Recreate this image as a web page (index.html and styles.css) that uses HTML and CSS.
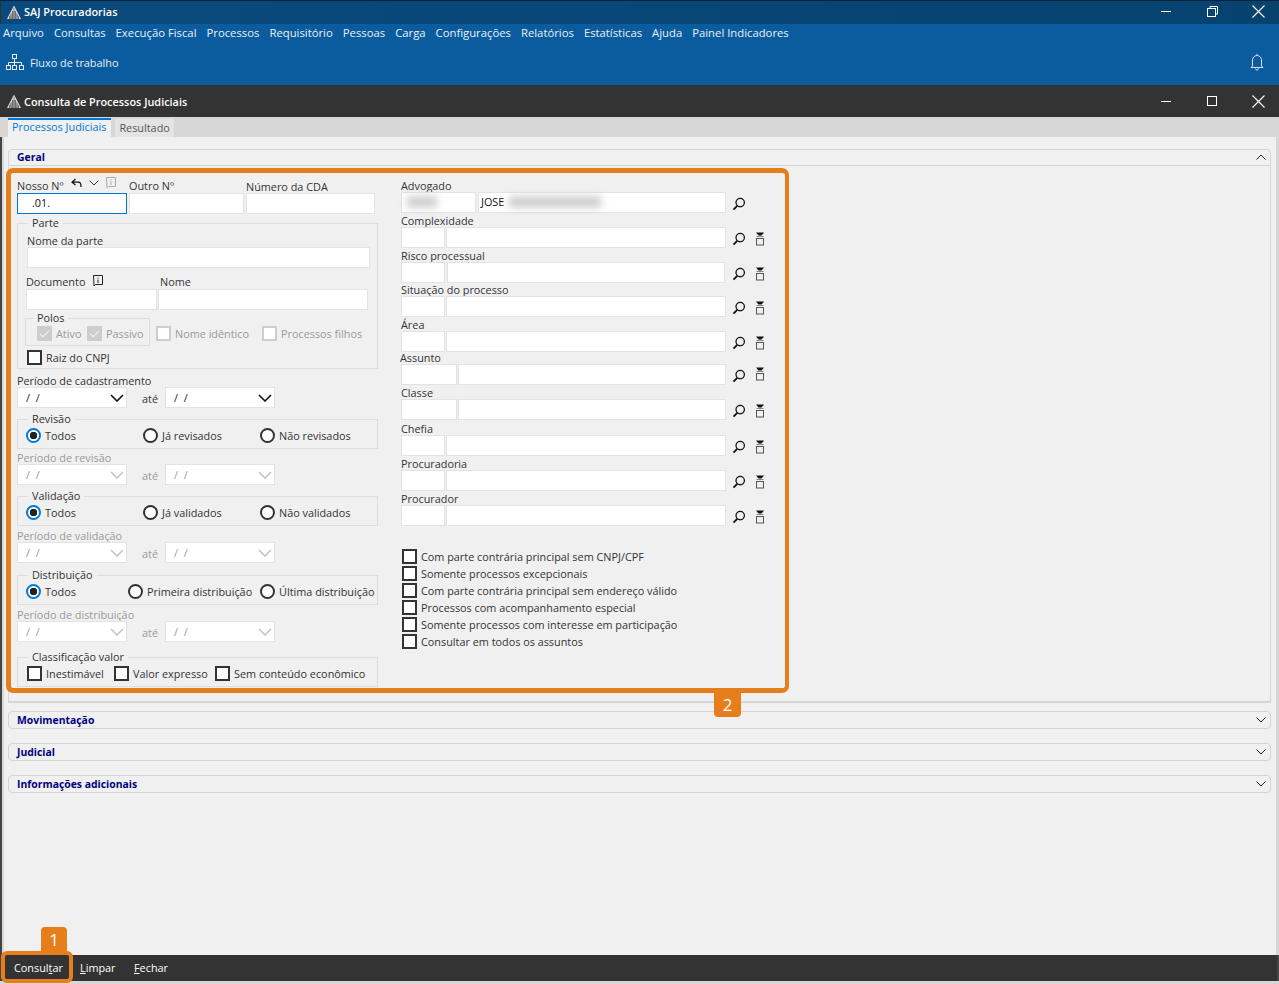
FILE: index.html
```html
<!DOCTYPE html>
<html lang="pt-BR">
<head>
    <meta charset="UTF-8">
    <meta name="viewport" content="width=device-width, initial-scale=1.0">
    <title>SAJ Procuradorias</title>
    <link rel="stylesheet" href="styles.css">
</head>
<body>
    <svg class="svg-defs" width="0" height="0">
        <defs>
            <symbol id="logo" viewBox="0 0 16 16">
                <path d="M8 1.5 L15 15 H1 Z" fill="#d8d8d8"/>
                <path d="M8 4V15M6.5 7V15M9.5 7V15M5 10V15M11 10V15M3.5 12V15M12.5 12V15M6 8H10M5 10H11M4 12H12M3 14H13" stroke="#444" stroke-width=".6" fill="none"/>
            </symbol>
            <symbol id="search" viewBox="0 0 14 14">
                <circle cx="8.2" cy="5.6" r="4.2" fill="none" stroke="#111" stroke-width="1.3"/>
                <path d="M5.2 8.8 L1.5 12.6" stroke="#111" stroke-width="1.8"/>
            </symbol>
            <symbol id="filter" viewBox="0 0 10 14">
                <path d="M1 0.5H9L6.5 3.5H3.5Z" fill="#111"/>
                <path d="M1.5 4.5H8.5" stroke="#888"/>
                <rect x="1.5" y="6.5" width="7" height="6.5" fill="none" stroke="#555"/>
            </symbol>
            <symbol id="chev" viewBox="0 0 14 8">
                <path d="M1 1 L7 7 L13 1" fill="none" stroke="currentColor" stroke-width="1.6"/>
            </symbol>
            <symbol id="chev-thin" viewBox="0 0 10 6">
                <path d="M.5 .5 L5 5 L9.5 .5" fill="none" stroke="currentColor" stroke-width="1"/>
            </symbol>
            <symbol id="close-x" viewBox="0 0 13 13">
                <path d="M.5 .5L12.5 12.5M12.5 .5L.5 12.5" stroke="#fff" stroke-width="1.1"/>
            </symbol>
        </defs>
    </svg>

    <div class="app">
        <!-- janela principal -->
        <div class="titlebar">
            <svg class="logo"><use href="#logo"/></svg>
            <span class="title-text">SAJ Procuradorias</span>
            <div class="win-buttons">
                <span class="win-min"></span>
                <svg class="win-restore" width="11" height="11" viewBox="0 0 11 11"><path d="M3 2.5V.5H10.5V8H8.5" fill="none" stroke="#fff"/><rect x=".5" y="2.5" width="8" height="8" fill="none" stroke="#fff"/></svg>
                <svg class="win-close" width="13" height="13"><use href="#close-x"/></svg>
            </div>
        </div>
        <div class="menubar">
            <span>Arquivo</span><span>Consultas</span><span>Execução Fiscal</span><span>Processos</span><span>Requisitório</span><span>Pessoas</span><span>Carga</span><span>Configurações</span><span>Relatórios</span><span>Estatísticas</span><span>Ajuda</span><span>Painel Indicadores</span>
        </div>
        <div class="toolbar">
            <svg class="flow-icon" width="20" height="18" viewBox="0 0 20 18">
                <g fill="none" stroke="#e6edf4">
                    <rect x="7.5" y="1.5" width="4" height="4"/>
                    <rect x="1.5" y="12.5" width="4" height="4"/>
                    <rect x="7.5" y="12.5" width="4" height="4"/>
                    <rect x="14.5" y="12.5" width="4" height="4"/>
                    <path d="M9.5 5.5V12.5M3.5 12.5V9.5H16.5V12.5"/>
                </g>
            </svg>
            <span class="flow-text">Fluxo de trabalho</span>
            <svg class="bell" width="14" height="18" viewBox="0 0 14 18">
                <path d="M2.5 13V7a4.5 4.5 0 0 1 9 0v6l1.5 1.5H1Z" fill="none" stroke="#d5dde6"/>
                <path d="M5.5 15.5a1.5 1.5 0 0 0 3 0M7 1v1.5" fill="none" stroke="#d5dde6"/>
            </svg>
        </div>

        <!-- janela interna -->
        <div class="subtitle">
            <svg class="logo"><use href="#logo"/></svg>
            <span class="title-text">Consulta de Processos Judiciais</span>
            <div class="win-buttons">
                <span class="win-min"></span>
                <span class="win-max"></span>
                <svg class="win-close" width="13" height="13"><use href="#close-x"/></svg>
            </div>
        </div>
        <div class="tabs">
            <span class="tab tab-active">Processos Judiciais</span>
            <span class="tab">Resultado</span>
        </div>

        <div class="content">
            <div class="panel-head geral">
                <span>Geral</span>
                <svg class="head-chev up" width="10" height="6"><use href="#chev-thin"/></svg>
            </div>
            <div class="panel-body">
                <div class="col-left">
                    <div class="row-numbers">
                        <div class="field w-nosso">
                            <div class="lbl lbl-icons">Nosso Nº
                                <svg class="back-icon" width="11" height="10" viewBox="0 0 11 10"><path d="M4.5 1L1 4.2L4.5 7M1 4.2H7.5Q10 4.2 10 9" fill="none" stroke="#111" stroke-width="1.2"/></svg>
                                <svg class="small-chev" width="10" height="6"><use href="#chev-thin"/></svg>
                                <svg class="note-icon" width="10" height="12" viewBox="0 0 10 12"><path d="M.5.5H9.5V9.5H2.5L1 11Z" fill="none" stroke="#aaa"/><path d="M5 2.5V3.5M5 4.5V8" stroke="#aaa"/></svg>
                            </div>
                            <input class="inp inp-focus" type="text" value=".01.">
                        </div>
                        <div class="field w-outro">
                            <div class="lbl">Outro Nº</div>
                            <input class="inp" type="text">
                        </div>
                        <div class="field w-cda">
                            <div class="lbl lbl-cda">Número da CDA</div>
                            <input class="inp" type="text">
                        </div>
                    </div>

                    <div class="group group-parte">
                        <div class="legend">Parte</div>
                        <div class="lbl lbl-parte">Nome da parte</div>
                        <input class="inp inp-parte" type="text">
                        <div class="row-doc">
                            <div class="field w-doc">
                                <div class="lbl lbl-doc">Documento
                                    <svg class="note-icon-dark" width="10" height="12" viewBox="0 0 10 12"><path d="M.5.5H9.5V9.5H2.5L1 11Z" fill="none" stroke="#222"/><path d="M5 2.5V3.5M5 4.5V8" stroke="#222"/></svg>
                                </div>
                                <input class="inp" type="text">
                            </div>
                            <div class="field w-nome">
                                <div class="lbl">Nome</div>
                                <input class="inp" type="text">
                            </div>
                        </div>
                        <div class="row-polos">
                            <div class="group group-polos">
                                <div class="legend legend-polos">Polos</div>
                                <div class="polos-items">
                                    <label class="opt disabled w-ativo"><span class="check checked"></span>Ativo</label>
                                    <label class="opt disabled"><span class="check checked"></span>Passivo</label>
                                </div>
                            </div>
                            <label class="opt disabled w-identico"><span class="check"></span>Nome idêntico</label>
                            <label class="opt disabled"><span class="check"></span>Processos filhos</label>
                        </div>
                        <label class="opt opt-raiz"><span class="check"></span>Raiz do CNPJ</label>
                    </div>

                    <div class="lbl lbl-periodo first">Período de cadastramento</div>
                    <div class="row-dates">
                        <div class="date"><span>/ /</span><svg width="14" height="8"><use href="#chev"/></svg></div>
                        <span class="ate">até</span>
                        <div class="date"><span>/ /</span><svg width="14" height="8"><use href="#chev"/></svg></div>
                    </div>

                    <div class="group group-radio">
                        <div class="legend">Revisão</div>
                        <div class="radios">
                            <label class="opt w-r1"><span class="radio on"></span>Todos</label>
                            <label class="opt w-r1"><span class="radio"></span>Já revisados</label>
                            <label class="opt"><span class="radio"></span>Não revisados</label>
                        </div>
                    </div>
                    <div class="lbl lbl-periodo muted lbl-revisao">Período de revisão</div>
                    <div class="row-dates off">
                        <div class="date"><span>/ /</span><svg width="14" height="8"><use href="#chev"/></svg></div>
                        <span class="ate">até</span>
                        <div class="date"><span>/ /</span><svg width="14" height="8"><use href="#chev"/></svg></div>
                    </div>

                    <div class="group group-radio">
                        <div class="legend">Validação</div>
                        <div class="radios">
                            <label class="opt w-r1"><span class="radio on"></span>Todos</label>
                            <label class="opt w-r1"><span class="radio"></span>Já validados</label>
                            <label class="opt"><span class="radio"></span>Não validados</label>
                        </div>
                    </div>
                    <div class="lbl lbl-periodo muted">Período de validação</div>
                    <div class="row-dates off">
                        <div class="date"><span>/ /</span><svg width="14" height="8"><use href="#chev"/></svg></div>
                        <span class="ate">até</span>
                        <div class="date"><span>/ /</span><svg width="14" height="8"><use href="#chev"/></svg></div>
                    </div>

                    <div class="group group-radio group-dist">
                        <div class="legend">Distribuição</div>
                        <div class="radios">
                            <label class="opt w-r2"><span class="radio on"></span>Todos</label>
                            <label class="opt w-r3"><span class="radio"></span>Primeira distribuição</label>
                            <label class="opt"><span class="radio"></span>Última distribuição</label>
                        </div>
                    </div>
                    <div class="lbl lbl-periodo muted">Período de distribuição</div>
                    <div class="row-dates off">
                        <div class="date"><span>/ /</span><svg width="14" height="8"><use href="#chev"/></svg></div>
                        <span class="ate">até</span>
                        <div class="date"><span>/ /</span><svg width="14" height="8"><use href="#chev"/></svg></div>
                    </div>

                    <div class="group group-radio group-valor">
                        <div class="legend">Classificação valor</div>
                        <div class="radios">
                            <label class="opt w-c1"><span class="check"></span>Inestimável</label>
                            <label class="opt w-c2"><span class="check"></span>Valor expresso</label>
                            <label class="opt"><span class="check"></span>Sem conteúdo econômico</label>
                        </div>
                    </div>
                </div>

                <div class="col-right">
                    <div class="lookup">
                        <div class="lbl">Advogado</div>
                        <div class="lookup-row">
                            <div class="inp box code-adv"><span class="blur blur-a"></span></div>
                            <div class="inp box desc-adv">JOSE<span class="blur blur-b"></span></div>
                            <svg class="ic-search" width="14" height="14"><use href="#search"/></svg>
                        </div>
                    </div>
                    <div class="lookup">
                        <div class="lbl">Complexidade</div>
                        <div class="lookup-row">
                            <input class="inp code" type="text"><input class="inp desc" type="text">
                            <svg class="ic-search" width="14" height="14"><use href="#search"/></svg>
                            <svg class="ic-filter" width="10" height="14"><use href="#filter"/></svg>
                        </div>
                    </div>
                    <div class="lookup">
                        <div class="lbl">Risco processual</div>
                        <div class="lookup-row">
                            <input class="inp code" type="text"><input class="inp desc desc-risco" type="text">
                            <svg class="ic-search" width="14" height="14"><use href="#search"/></svg>
                            <svg class="ic-filter" width="10" height="14"><use href="#filter"/></svg>
                        </div>
                    </div>
                    <div class="lookup tight">
                        <div class="lbl">Situação do processo</div>
                        <div class="lookup-row">
                            <input class="inp code" type="text"><input class="inp desc" type="text">
                            <svg class="ic-search" width="14" height="14"><use href="#search"/></svg>
                            <svg class="ic-filter" width="10" height="14"><use href="#filter"/></svg>
                        </div>
                    </div>
                    <div class="lookup">
                        <div class="lbl">Área</div>
                        <div class="lookup-row">
                            <input class="inp code" type="text"><input class="inp desc" type="text">
                            <svg class="ic-search" width="14" height="14"><use href="#search"/></svg>
                            <svg class="ic-filter" width="10" height="14"><use href="#filter"/></svg>
                        </div>
                    </div>
                    <div class="lookup tighter">
                        <div class="lbl lbl-assunto">Assunto</div>
                        <div class="lookup-row">
                            <input class="inp code-wide" type="text"><input class="inp desc-short" type="text">
                            <svg class="ic-search" width="14" height="14"><use href="#search"/></svg>
                            <svg class="ic-filter" width="10" height="14"><use href="#filter"/></svg>
                        </div>
                    </div>
                    <div class="lookup">
                        <div class="lbl">Classe</div>
                        <div class="lookup-row">
                            <input class="inp code-wide" type="text"><input class="inp desc-short" type="text">
                            <svg class="ic-search" width="14" height="14"><use href="#search"/></svg>
                            <svg class="ic-filter" width="10" height="14"><use href="#filter"/></svg>
                        </div>
                    </div>
                    <div class="lookup wide">
                        <div class="lbl">Chefia</div>
                        <div class="lookup-row">
                            <input class="inp code" type="text"><input class="inp desc" type="text">
                            <svg class="ic-search" width="14" height="14"><use href="#search"/></svg>
                            <svg class="ic-filter" width="10" height="14"><use href="#filter"/></svg>
                        </div>
                    </div>
                    <div class="lookup">
                        <div class="lbl">Procuradoria</div>
                        <div class="lookup-row">
                            <input class="inp code" type="text"><input class="inp desc" type="text">
                            <svg class="ic-search" width="14" height="14"><use href="#search"/></svg>
                            <svg class="ic-filter" width="10" height="14"><use href="#filter"/></svg>
                        </div>
                    </div>
                    <div class="lookup">
                        <div class="lbl">Procurador</div>
                        <div class="lookup-row">
                            <input class="inp code" type="text"><input class="inp desc" type="text">
                            <svg class="ic-search" width="14" height="14"><use href="#search"/></svg>
                            <svg class="ic-filter" width="10" height="14"><use href="#filter"/></svg>
                        </div>
                    </div>

                    <div class="check-list">
                        <label class="opt"><span class="check"></span>Com parte contrária principal sem CNPJ/CPF</label>
                        <label class="opt"><span class="check"></span>Somente processos excepcionais</label>
                        <label class="opt"><span class="check"></span>Com parte contrária principal sem endereço válido</label>
                        <label class="opt"><span class="check"></span>Processos com acompanhamento especial</label>
                        <label class="opt"><span class="check"></span>Somente processos com interesse em participação</label>
                        <label class="opt"><span class="check"></span>Consultar em todos os assuntos</label>
                    </div>
                </div>
            </div>

            <div class="panel-head collapsed">
                <span>Movimentação</span>
                <svg class="head-chev" width="10" height="6"><use href="#chev-thin"/></svg>
            </div>
            <div class="panel-head collapsed">
                <span>Judicial</span>
                <svg class="head-chev" width="10" height="6"><use href="#chev-thin"/></svg>
            </div>
            <div class="panel-head collapsed">
                <span>Informações adicionais</span>
                <svg class="head-chev" width="10" height="6"><use href="#chev-thin"/></svg>
            </div>
        </div>

        <div class="footer">
            <span class="w-consultar">Consul<u>t</u>ar</span>
            <span class="w-limpar"><u>L</u>impar</span>
            <span><u>F</u>echar</span>
        </div>
        <div class="bottom-edge"></div>

        <!-- marcações do tutorial -->
        <div class="mark mark-form"></div>
        <div class="mark mark-btn"></div>
        <div class="badge badge-1">1</div>
        <div class="badge badge-2">2</div>
    </div>
</body>
</html>
```

FILE: styles.css
```css
* {
    box-sizing: border-box;
}
html, body {
    margin: 0;
    padding: 0;
    height: 100%;
    overflow: hidden;
}
body {
    font-family: "Open Sans", "Noto Sans", sans-serif;
    font-size: 10.85px;
    color: #333;
    background: #f0f0f0;
}
.svg-defs {
    display: block;
    height: 0;
}
.app {
    position: relative;
    width: 1279px;
    height: 984px;
    display: flex;
    flex-direction: column;
    background: #444;
}

/* barras de titulo */
.titlebar {
    height: 24px;
    flex: none;
    display: flex;
    align-items: center;
    padding: 0 0 2px 5px;
    background: linear-gradient(90deg, #094a7e, #07426f);
    border-top: 1px solid #0a2238;
    border-left: 1px solid #333;
    color: #fff;
}
.logo {
    width: 16px;
    height: 16px;
    margin-right: 2px;
}
.title-text {
    font-weight: 600;
    font-size: 10.9px;
    color: #fff;
}
.win-buttons {
    margin-left: auto;
    display: flex;
    align-items: center;
    height: 100%;
}
.win-min {
    width: 10px;
    height: 1px;
    background: #fff;
    margin-right: 36px;
}
.win-max {
    width: 10px;
    height: 10px;
    border: 1px solid #fff;
    margin-right: 35px;
}
.win-restore {
    margin-right: 34px;
}
.win-close {
    margin-right: 14px;
}
.menubar {
    height: 20px;
    flex: none;
    display: flex;
    align-items: center;
    gap: 10px;
    padding: 0 0 3px 3px;
    background: #0b5c9e;
    font-size: 11.3px;
    color: #eaf0f6;
}
.toolbar {
    height: 41px;
    flex: none;
    display: flex;
    align-items: center;
    padding: 0 15px 5px 5px;
    background: #0b5c9e;
    color: #eaf0f6;
}
.flow-text {
    margin-left: 5px;
}
.bell {
    margin-left: auto;
}
.subtitle {
    height: 32px;
    flex: none;
    display: flex;
    align-items: center;
    padding-left: 6px;
    background: #333;
}

/* abas */
.tabs {
    height: 20px;
    flex: none;
    display: flex;
    align-items: flex-end;
    gap: 4px;
    padding-left: 8px;
    background: #d7d7d7;
}
.tab {
    height: 18px;
    line-height: 17px;
    padding: 0 4px;
    background: #e4e4e4;
    color: #555;
}
.tab-active {
    height: 19px;
    line-height: 14px;
    padding-right: 5px;
    border-top: 2px solid #0078d7;
    background: #f0f0f0;
    color: #0078d7;
}

/* conteudo */
.content {
    flex: 1;
    padding: 12px 5px 0 4px;
    background: #f0f0f0;
    margin-left: 2px;
    border-left: 2px solid #d7d7d7;
    border-right: 3px solid #d7d7d7;
}
.panel-head {
    height: 18px;
    display: flex;
    align-items: center;
    justify-content: space-between;
    padding: 0 4px 2px 8px;
    border: 1px solid #d5d5d5;
    border-radius: 4px 4px 0 0;
    font-weight: 700;
    font-size: 10.4px;
    color: #000080;
}
.panel-head.geral {
    height: 17px;
}
.panel-head.collapsed {
    margin-bottom: 14px;
    padding-bottom: 0;
    border-radius: 4px;
}
.head-chev {
    color: #222;
}
.head-chev.up {
    transform: rotate(180deg);
}
.panel-body {
    height: 537px;
    margin-bottom: 8px;
    display: flex;
    padding: 12px 0 0 8px;
    border: 1px solid #d5d5d5;
    border-top: 0;
    border-bottom-width: 2px;
}
.col-left {
    width: 361px;
    flex: none;
}
.col-right {
    width: 375px;
    flex: none;
    margin-left: 23px;
}

/* campos */
.lbl {
    height: 14px;
    line-height: 14px;
    padding-top: 1px;
    white-space: nowrap;
}
.inp {
    display: block;
    height: 21px;
    width: 100%;
    padding: 0 2px 2px;
    border: 1px solid #e3e3e3;
    background: #fff;
    font: inherit;
    color: #111;
    outline: none;
}
.inp-focus {
    border-color: #0078d7;
    padding-left: 14px;
}
.row-numbers {
    display: flex;
    gap: 2px;
}
.row-numbers .lbl {
    height: 15px;
}
.row-numbers .lbl-cda {
    padding-top: 2px;
}
.w-nosso { width: 110px; }
.w-outro { width: 115px; }
.w-cda { width: 129px; }
.row-numbers .lbl-icons {
    display: flex;
    align-items: center;
    padding-top: 0;
}
.back-icon {
    margin-left: 7px;
    margin-top: -5px;
}
.small-chev {
    margin-left: 7px;
    margin-top: -5px;
    color: #333;
}
.note-icon {
    margin-left: 7px;
    margin-top: -6px;
}
.note-icon-dark {
    margin-left: 5px;
    margin-bottom: 1px;
}
.row-doc .lbl-doc {
    display: flex;
    align-items: center;
    gap: 3px;
    padding-top: 0;
}

/* grupos */
.group {
    border: 1px solid #dedede;
}
.legend {
    width: fit-content;
    height: 14px;
    line-height: 14px;
    margin: -9px 0 0 1px;
    padding: 1px 4px 0;
    background: #f0f0f0;
}
.group-parte {
    height: 146px;
    margin-top: 9px;
    padding-left: 9px;
}
.lbl-parte {
    margin-top: 4px;
}
.inp-parte {
    width: 343px;
}
.row-doc {
    display: flex;
    gap: 1px;
    margin: 6px 0 0 -1px;
}
.row-doc .lbl {
    height: 15px;
}
.w-doc { width: 131px; }
.w-nome { width: 210px; }
.w-nome .lbl { padding-left: 2px; }
.row-polos {
    display: flex;
    align-items: flex-start;
    margin: 8px 0 0 -2px;
}
.group-polos {
    width: 125px;
    height: 28px;
    padding-left: 11px;
    flex: none;
}
.legend-polos {
    margin-left: -4px;
}
.polos-items {
    display: flex;
    margin-top: 1px;
}
.opt {
    display: inline-flex;
    align-items: center;
    gap: 4px;
    height: 17px;
    white-space: nowrap;
}
.opt.disabled {
    color: #9a9a9a;
}
.row-polos > .opt {
    margin-top: 7px;
}
.w-ativo { width: 50px; }
.w-identico {
    width: 106px;
    margin-left: 6px;
}
.opt-raiz {
    margin-top: 3px;
}
.check, .radio {
    width: 15px;
    height: 15px;
    flex: none;
    border: 2px solid #333;
    background: #fff;
}
.disabled .check {
    border-color: #cdcdcd;
}
.check.checked {
    position: relative;
    background: #cdcdcd;
}
.check.checked::after {
    content: "";
    position: absolute;
    left: 3px;
    top: 0;
    width: 4px;
    height: 8px;
    border: solid #f4f4f4;
    border-width: 0 1px 1px 0;
    transform: rotate(45deg);
}
.radio {
    border-radius: 50%;
    margin-left: -1px;
}
.radio.on {
    border-color: #0078d7;
    background: radial-gradient(circle, #222 0 3.5px, #fff 4px);
}

/* periodos */
.lbl-periodo {
    margin-top: 2px;
}
.lbl-periodo.first {
    margin-top: 4px;
}
.lbl-periodo.lbl-revisao {
    margin-top: 1px;
}
.muted {
    color: #9a9a9a;
}
.row-dates {
    display: flex;
    align-items: center;
    height: 21px;
}
.date {
    width: 110px;
    height: 21px;
    display: flex;
    align-items: center;
    justify-content: space-between;
    padding: 0 2px 0 8px;
    border: 1px solid #e3e3e3;
    background: #fff;
    color: #222;
}
.date svg {
    color: #111;
}
.date span {
    word-spacing: 3px;
}
.ate {
    width: 38px;
    padding-left: 15px;
    padding-top: 2px;
}
.off .date {
    color: #999;
}
.off .date svg {
    color: #c4c4c4;
}
.off .ate {
    color: #9a9a9a;
}
.group-radio {
    height: 30px;
    margin-top: 11px;
    padding-left: 9px;
}
.radios {
    display: flex;
    margin-top: 2px;
}
.w-r1 { width: 117px; }
.w-r2 { width: 102px; }
.w-r3 { width: 132px; }
.w-c1 { width: 87px; }
.w-c2 { width: 101px; }
.group-dist {
    margin-top: 12px;
}
.group-valor {
    margin-top: 15px;
}

/* coluna direita */
.lookup.tight {
    margin-top: -1px;
}
.lookup.tighter {
    margin-top: -2px;
}
.lookup.wide {
    margin-top: 1px;
}
.lbl-assunto {
    margin-left: -1px;
}
.lookup-row {
    display: flex;
    align-items: center;
    height: 21px;
}
.lookup-row .inp {
    flex: none;
}
.code {
    width: 44px;
    margin-right: 1px;
}
.desc {
    width: 280px;
}
.desc-risco {
    width: 278px;
    margin-left: 1px;
    margin-right: 1px;
}
.code-wide {
    width: 56px;
    margin-right: 1px;
}
.desc-short {
    width: 268px;
}
.code-adv {
    width: 75px;
    margin-right: 2px;
}
.desc-adv {
    width: 248px;
}
.box {
    display: flex;
    align-items: center;
}
.blur {
    display: block;
    height: 10px;
    background: #c6c6c6;
    filter: blur(4px);
}
.blur-a {
    width: 30px;
    margin-left: 3px;
}
.blur-b {
    width: 92px;
    margin-left: 5px;
}
.ic-search {
    margin-left: 6px;
    margin-top: 2px;
}
.ic-filter {
    margin-left: 9px;
    margin-top: 3px;
}
.tighter .ic-filter {
    margin-top: -2px;
}
.check-list {
    display: flex;
    flex-direction: column;
    margin-top: 22px;
    margin-left: 1px;
}

/* rodape */
.footer {
    height: 26px;
    flex: none;
    display: flex;
    align-items: center;
    padding: 0 0 1px 12px;
    margin: 0 2px;
    background: #333;
    color: #fff;
}
.w-consultar { width: 66px; }
.w-limpar { width: 54px; }
.bottom-edge {
    height: 3px;
    flex: none;
    background: #d7d7d7;
}

/* marcacoes laranja */
.mark {
    position: absolute;
    border: 4px solid #e67e1c;
}
.mark-form {
    left: 6px;
    top: 168px;
    width: 783px;
    height: 525px;
    border-width: 5px 4px 5px 5px;
    border-radius: 7px;
}
.mark-btn {
    left: 1px;
    top: 951px;
    width: 72px;
    height: 32px;
    border-radius: 6px;
}
.badge {
    position: absolute;
    height: 25px;
    line-height: 25px;
    text-align: center;
    background: #e67e1c;
    color: #fff;
    font-size: 17px;
}
.badge-1 {
    left: 41px;
    top: 927px;
    width: 26px;
    border-radius: 4px 4px 0 0;
}
.badge-2 {
    left: 714px;
    top: 692px;
    width: 27px;
    border-radius: 0 0 4px 4px;
}
```
